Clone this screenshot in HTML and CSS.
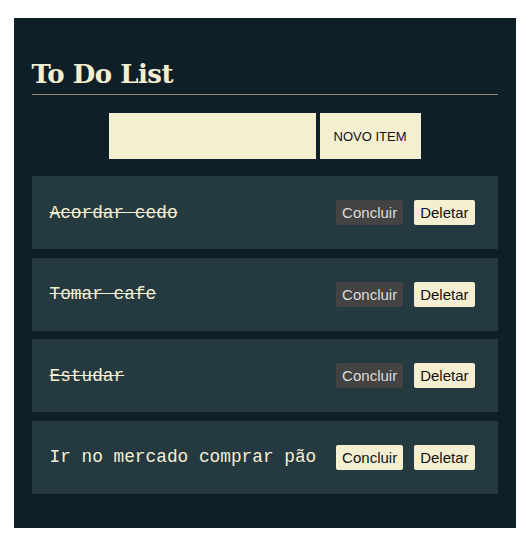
FILE: index.html
```
<!DOCTYPE html>
<html lang="pt-BR">
<head>
<meta charset="utf-8">
<title>To Do List</title>
<link rel="stylesheet" href="styles.css">
</head>
<body>
<main class="app">
  <h1 class="title">To Do List</h1>
  <form class="add-form">
    <input class="add-input" type="text">
    <button class="add-btn" type="button">NOVO ITEM</button>
  </form>
  <ul class="list">
    <li class="item done">
      <span class="item-text">Acordar cedo</span>
      <div class="actions"><button class="btn btn-done">Concluir</button><button class="btn">Deletar</button></div>
    </li>
    <li class="item done">
      <span class="item-text">Tomar cafe</span>
      <div class="actions"><button class="btn btn-done">Concluir</button><button class="btn">Deletar</button></div>
    </li>
    <li class="item done">
      <span class="item-text">Estudar</span>
      <div class="actions"><button class="btn btn-done">Concluir</button><button class="btn">Deletar</button></div>
    </li>
    <li class="item">
      <span class="item-text">Ir no mercado comprar pão</span>
      <div class="actions"><button class="btn">Concluir</button><button class="btn">Deletar</button></div>
    </li>
  </ul>
</main>
</body>
</html>
```
FILE: styles.css
```
* { box-sizing: border-box; }
html, body { margin: 0; padding: 0; background: #ffffff; }
body { padding: 18px 0 21px; }
.app {
  width: 502px;
  margin: 0 auto;
  background: #0e1f27;
  padding: 36px 18px 34px;
}
.title {
  margin: 0;
  font-family: "DejaVu Serif", serif;
  font-weight: bold;
  font-size: 26px;
  line-height: 40px;
  color: #f5efd2;
  border-bottom: 1px solid #8a8a7c;
  padding-bottom: 0;
  letter-spacing: -0.5px;
}
.add-form {
  display: flex;
  justify-content: center;
  gap: 4px;
  margin: 18px 0 17px;
}
.add-input {
  width: 207px;
  height: 46px;
  border: none;
  background: #f5efd2;
  margin: 0;
}
.add-btn {
  width: 101px;
  height: 46px;
  border: none;
  background: #f5efd2;
  font-family: "Liberation Sans", Arial, sans-serif;
  font-size: 13px;
  color: #111;
  margin: 0;
}
.list {
  list-style: none;
  margin: 0;
  padding: 0;
  display: flex;
  flex-direction: column;
  gap: 8.5px;
}
.item {
  height: 73px;
  background: #253940;
  display: flex;
  align-items: center;
  justify-content: space-between;
  padding: 0 23px 0 18px;
}
.item-text {
  font-family: "Liberation Mono", "DejaVu Sans Mono", monospace;
  font-size: 17.8px;
  color: #f5efd2;
}
.done .item-text { text-decoration: line-through; }
.actions { display: flex; gap: 11px; }
.btn {
  font-family: "Liberation Sans", Arial, sans-serif;
  font-size: 15px;
  height: 25px;
  padding: 0 6px;
  border: none;
  border-radius: 2px;
  background: #f5efd2;
  color: #111;
}
.btn-done { background: #434343; color: #ddd; }
```
